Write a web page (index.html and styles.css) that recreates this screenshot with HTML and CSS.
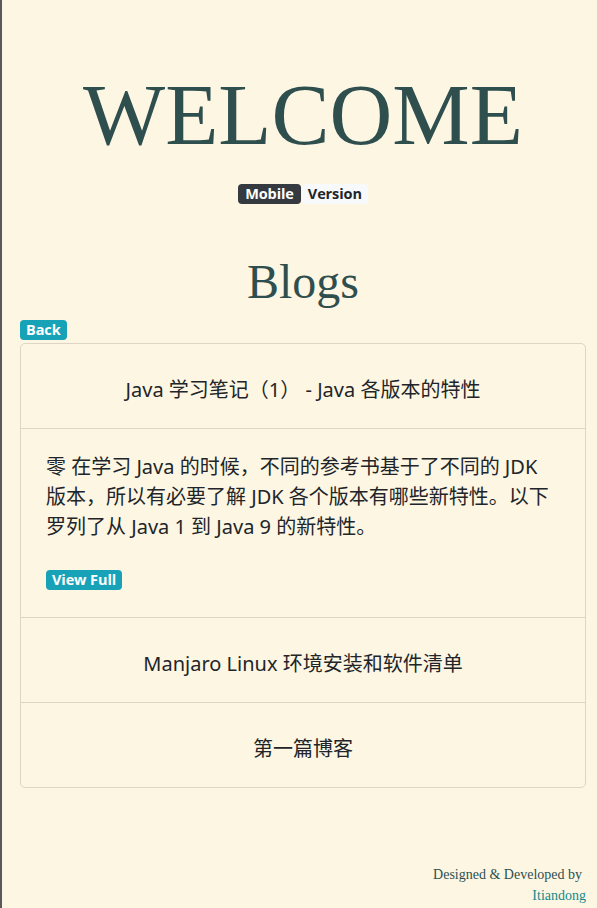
FILE: index.html
```html
<!DOCTYPE html>
<html lang="zh">
<head>
<meta charset="utf-8">
<title>Welcome</title>
<link rel="stylesheet" href="styles.css">
</head>
<body>
<div class="page">
  <header class="hero">
    <h1 class="welcome">WELCOME</h1>
    <div class="version">
      <span class="tag tag-dark">Mobile</span><span class="tag tag-light">Version</span>
    </div>
  </header>
  <main class="blogs">
    <h2 class="blogs-title">Blogs</h2>
    <div class="back-row"><span class="tag tag-info">Back</span></div>
    <ul class="card">
      <li class="item item-title">Java 学习笔记（1） - Java 各版本的特性</li>
      <li class="item item-body">
        <p class="excerpt">零 在学习 Java 的时候，不同的参考书基于了不同的 JDK 版本，所以有必要了解 JDK 各个版本有哪些新特性。以下罗列了从 Java 1 到 Java 9 的新特性。</p>
        <div class="more"><span class="tag tag-info">View Full</span></div>
      </li>
      <li class="item item-title">Manjaro Linux 环境安装和软件清单</li>
      <li class="item item-title">第一篇博客</li>
    </ul>
  </main>
  <footer class="footer">
    <div class="credit">Designed &amp; Developed by</div>
    <div class="author">Itiandong</div>
  </footer>
</div>
</body>
</html>
```

FILE: styles.css
```css
html, body {
  margin: 0;
  padding: 0;
}
body {
  background: #fdf6e3;
  border-left: 2px solid #5a5a5a;
  min-height: 908px;
  box-sizing: border-box;
  font-family: "Liberation Serif", serif;
  color: #2f4f4f;
}
.page {
  padding: 0 11px 0 18px;
  display: flex;
  flex-direction: column;
}
.hero {
  display: flex;
  flex-direction: column;
  align-items: center;
  padding-top: 71px;
}
.welcome {
  margin: 0;
  font-family: "Liberation Serif", serif;
  font-weight: 400;
  font-size: 87px;
  line-height: 87px;
  color: #2f4f4f;
}
.version {
  margin-top: 26px;
  display: flex;
  gap: 1px;
}
.tag {
  display: inline-block;
  font-family: "Open Sans", "Noto Sans", sans-serif;
  font-weight: 700;
  font-size: 14.5px;
  line-height: 20px;
  height: 20px;
  padding: 0 6px;
  border-radius: 4px;
  letter-spacing: -0.1px;
}
.tag-dark {
  background: #343a40;
  color: #fff;
  padding: 0 7px;
}
.tag-light {
  background: #f8f9fa;
  color: #212529;
}
.tag-info {
  background: #17a2b8;
  color: #fff;
}
.blogs {
  display: flex;
  flex-direction: column;
}
.blogs-title {
  margin: 54px 0 0;
  text-align: center;
  font-family: "Liberation Serif", serif;
  font-weight: 400;
  font-size: 48px;
  line-height: 48px;
  color: #2f4f4f;
}
.back-row {
  margin-top: 14px;
  display: flex;
}
.back-row .tag {
  padding: 0 6px;
}
.card {
  list-style: none;
  margin: 3px 0 0;
  padding: 0;
  border: 1px solid #ddd6c6;
  border-radius: 5px;
}
.item {
  font-family: "Noto Sans", "Noto Sans CJK SC", sans-serif;
  color: #212529;
  font-size: 20px;
}
.item + .item {
  border-top: 1px solid #ddd6c6;
}
.item-title {
  text-align: center;
  line-height: 28px;
  padding: 32px 20px 24px;
  height: 28px;
}
.item-body {
  padding: 23px 25px 27px;
}
.excerpt {
  margin: 0;
  line-height: 30px;
  font-size: 20px;
}
.more {
  margin-top: 28px;
  display: flex;
}
.more .tag {
  padding: 0 6px;
}
.footer {
  margin-top: 76px;
  display: flex;
  flex-direction: column;
  align-items: flex-end;
  font-family: "Liberation Serif", serif;
  font-size: 14px;
  line-height: 21px;
}
.credit {
  color: #2f4f4f;
  margin-right: 4px;
}
.author {
  color: #138a8a;
}
```
